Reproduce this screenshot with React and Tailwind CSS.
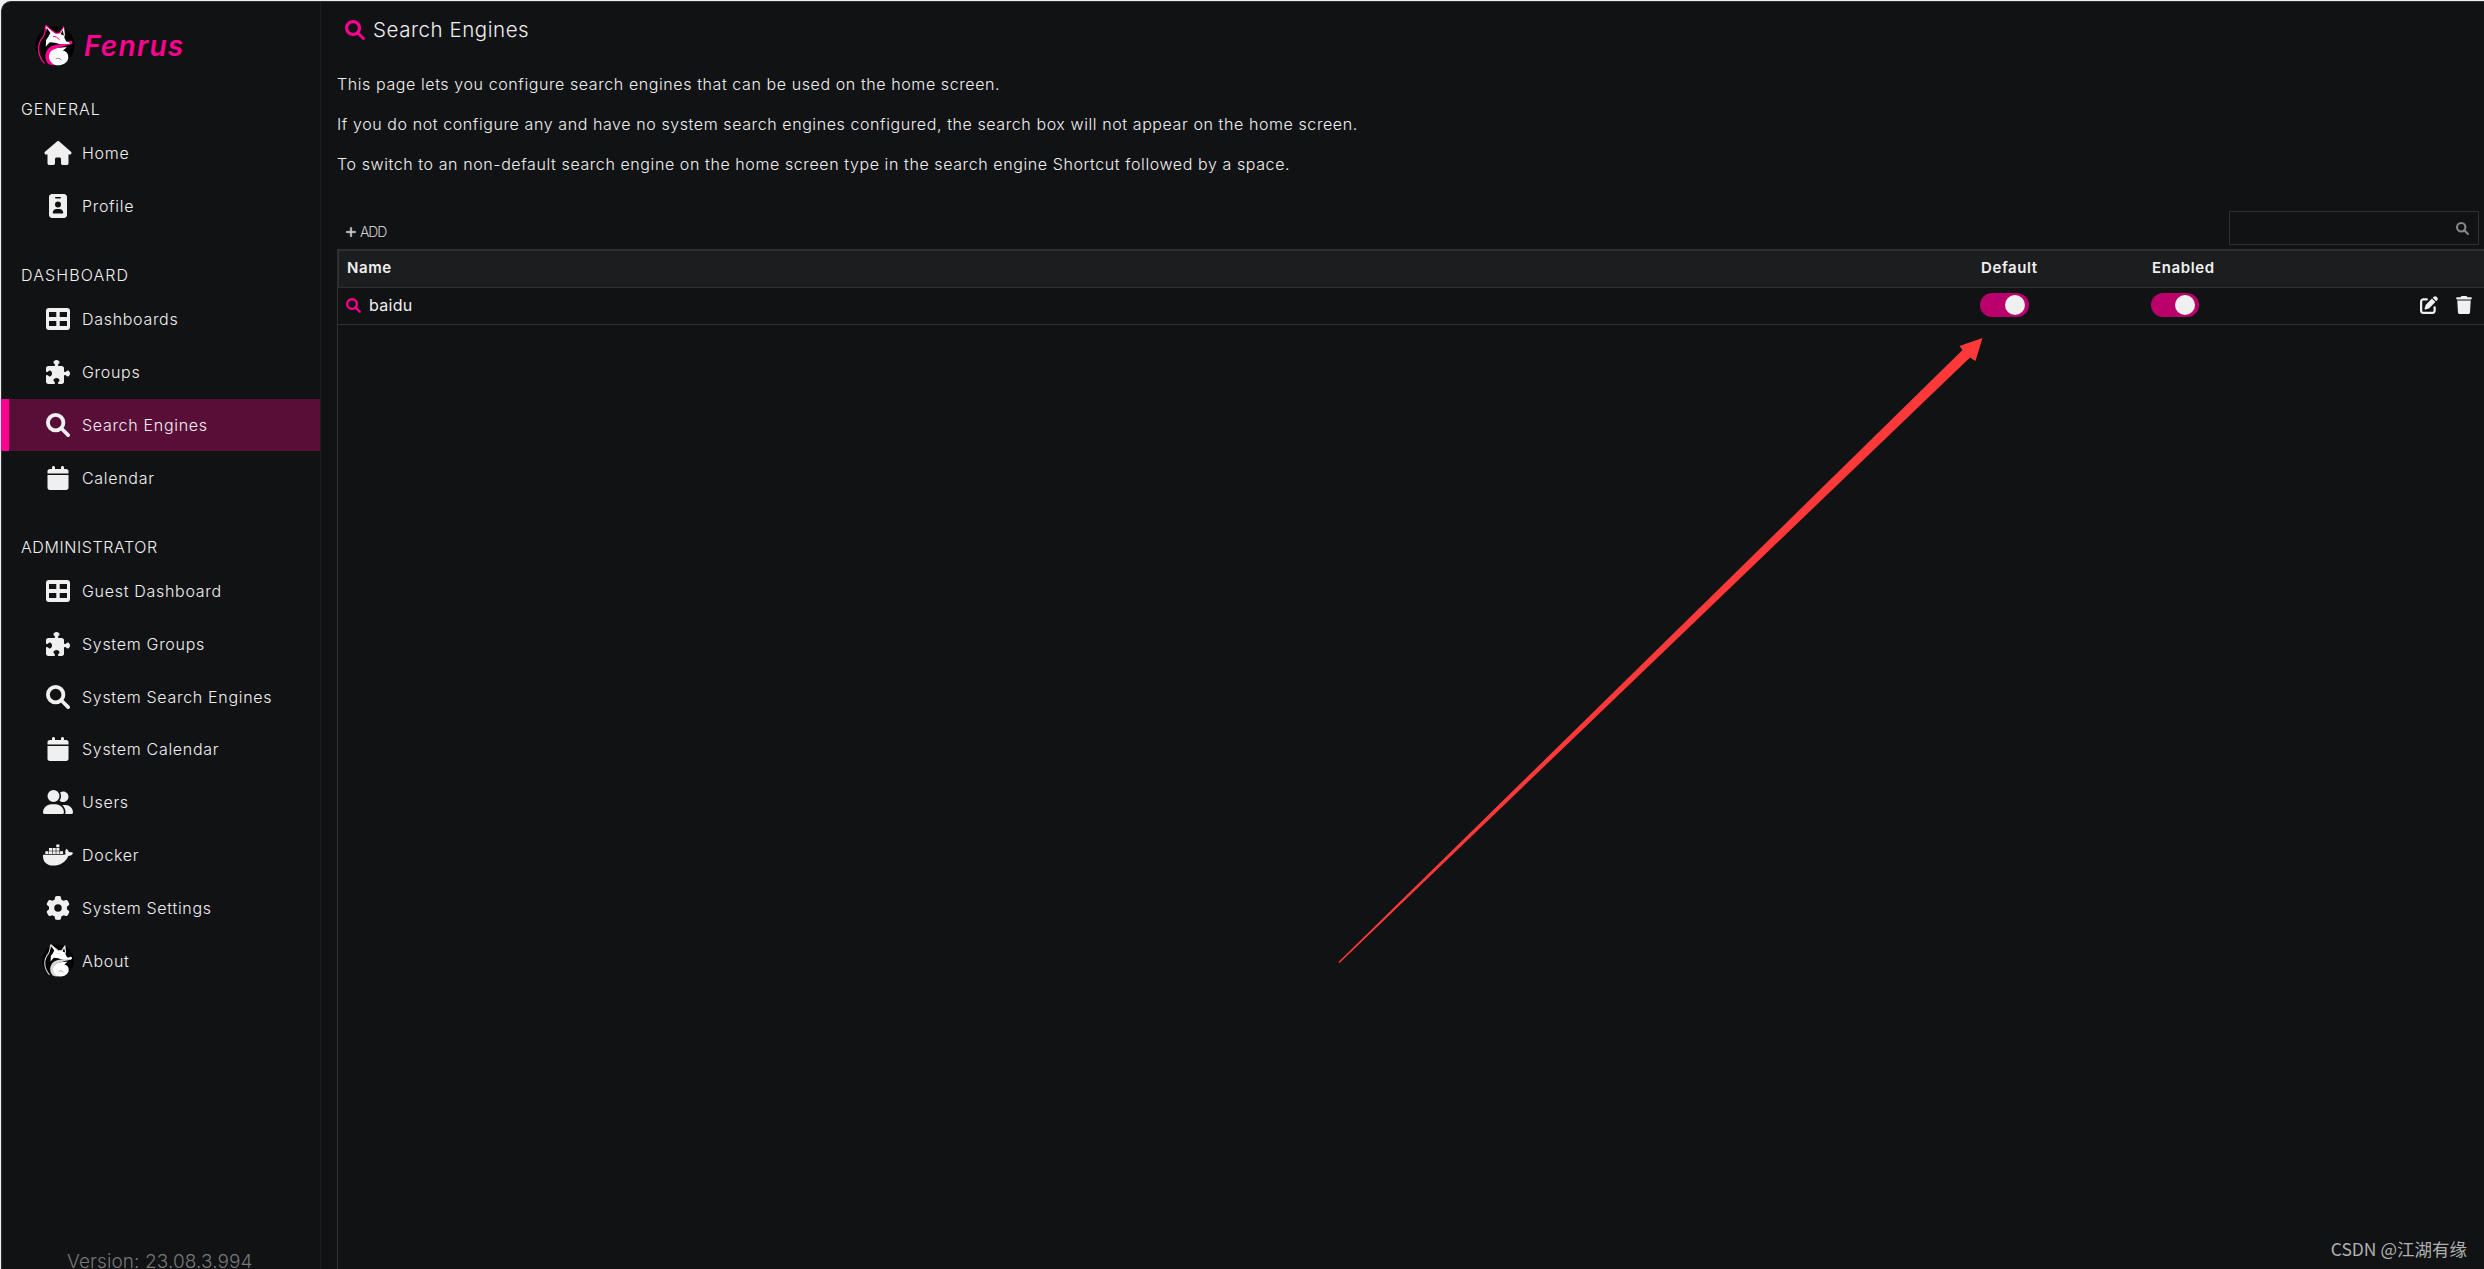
import React, { useState } from "react"
import {
  FaHouse, FaIdBadge, FaPuzzlePiece, FaCalendar,
  FaUserGroup, FaDocker, FaGear, FaPlus, FaPenToSquare, FaTrash,
} from "react-icons/fa6"

function SearchIcon({ className }) {
  return (
    <svg viewBox="0 0 512 512" className={className} fill="none" stroke="currentColor">
      <circle cx="206" cy="206" r="165" strokeWidth="82" />
      <path d="M325 325 L472 472" strokeWidth="76" strokeLinecap="round" />
    </svg>
  )
}

function GridIcon({ className }) {
  return (
    <svg viewBox="0 0 24 24" className={className} fill="currentColor" fillRule="evenodd">
      <path d="M3 1H21A3 3 0 0 1 24 4V20A3 3 0 0 1 21 23H3A3 3 0 0 1 0 20V4A3 3 0 0 1 3 1ZM3 5V10H10.3V5ZM13.7 5V10H21V5ZM3 14V19H10.3V14ZM13.7 14V19H21V14Z" />
    </svg>
  )
}

function FoxLogo({ className, accent = "#ff0090", nose = accent }) {
  return (
    <svg viewBox="14 30 120 124" className={className}>
      <circle cx="74" cy="92" r="59" fill="#000" />
      {/* tail outline */}
      <path d="M46 34 C43 48 45 56 38 66 C22 84 16 116 42 146" fill="none" stroke={accent} strokeWidth="4" />
      {/* ears and head */}
      <path d="M46 31 L63 45 L76 55 L88 54 L101 34 L104 58 L102 68 L108 80 L123 82 L122 88 L96 90 L74 84 L58 82 L46 96 L47 76 L54 64 L47 50 Z" fill="#fff" />
      <path d="M49 38 L60 54 L51 70 L46 56 Z" fill="#000" />
      <path d="M97 46 L101 62 L91 58 Z" fill="#000" />
      <path d="M46 31 L63 45 L76 55 L88 54 L100 36" fill="none" stroke={accent} strokeWidth="3.5" />
      <path d="M68 64 L78 66 L88 75" fill="none" stroke={accent} strokeWidth="3" />
      <path d="M116 79 L125 78 L127 85 L119 90 Z" fill={nose} />
      <path d="M122 88 C94 86 72 88 60 96 C42 108 40 134 54 148 L66 152 L76 151 C58 140 56 122 62 110 C74 98 96 96 122 88 Z" fill={accent} />
      {/* body */}
      <path d="M60 112 C70 99 92 97 110 97 L98 107 C112 110 117 122 113 135 C106 150 88 154 74 151 C55 143 52 124 60 112 Z" fill="#fff" />
      <path d="M76 133 C82 129 90 130 94 137" fill="none" stroke="#555" strokeWidth="2" />
    </svg>
  )
}

const WhiteFox = () => <FoxLogo className="w-8 h-[33px] shrink-0" accent="#d8d8d8" nose="#fff" />

const MENU = [
  {
    title: "GENERAL",
    tracking: "tracking-[0.95px]",
    items: [
      { label: "Home", icon: FaHouse },
      { label: "Profile", icon: FaIdBadge },
    ],
  },
  {
    title: "DASHBOARD",
    tracking: "tracking-[1.1px]",
    items: [
      { label: "Dashboards", icon: GridIcon },
      { label: "Groups", icon: FaPuzzlePiece },
      { label: "Search Engines", icon: SearchIcon, active: true },
      { label: "Calendar", icon: FaCalendar },
    ],
  },
  {
    title: "ADMINISTRATOR",
    tracking: "tracking-[0.6px]",
    items: [
      { label: "Guest Dashboard", icon: GridIcon },
      { label: "System Groups", icon: FaPuzzlePiece },
      { label: "System Search Engines", icon: SearchIcon },
      { label: "System Calendar", icon: FaCalendar },
      { label: "Users", icon: FaUserGroup },
      { label: "Docker", icon: FaDocker },
      { label: "System Settings", icon: FaGear },
      { label: "About", icon: WhiteFox, custom: true },
    ],
  },
]

function MenuItem({ item }) {
  const Icon = item.icon
  return (
    <li className="h-[52.8px] flex items-center">
      <a
        className={`h-[52px] w-full flex items-center border-l-8 pl-[33px] ${
          item.active ? "bg-[#590e38] border-[#ff0090]" : "border-transparent"
        }`}
      >
        <span className="w-8 h-8 flex items-center justify-center shrink-0">
          {item.custom ? <Icon /> : <Icon className="w-[30px] h-6" />}
        </span>
        <span className="ml-2 text-base tracking-[0.7px] whitespace-nowrap">{item.label}</span>
      </a>
    </li>
  )
}

function Sidebar() {
  return (
    <nav className="w-[320px] -ml-px shrink-0 border-r border-[#1c1d1f] flex flex-col">
      <div className="flex items-center h-[68px] pl-[34px] pt-[18px]">
        <FoxLogo className="w-10 h-[41px] shrink-0" />
        <span className="ml-[9px] pt-[2px] text-[28px] leading-none font-semibold italic tracking-[1.3px] text-[#ff0090]">Fenrus</span>
      </div>
      <div className="pt-[13.9px]">
        {MENU.map((group) => (
          <div key={group.title} className="mb-[17.2px]">
            <h3 className={`h-[43.2px] flex items-center pt-2 pl-5 text-base ${group.tracking}`}>{group.title}</h3>
            <ul>
              {group.items.map((item) => <MenuItem key={item.label} item={item} />)}
            </ul>
          </div>
        ))}
      </div>
      <div className="mt-auto pl-[66px] leading-[15px] text-[19px] tracking-[0.1px] text-[#777]">
        Version: 23.08.3.994
      </div>
    </nav>
  )
}

function Toggle({ className }) {
  const [on, setOn] = useState(true)
  return (
    <button
      onClick={() => setOn(!on)}
      className={`h-6 rounded-full p-0.5 pr-1 flex ${on ? "justify-end bg-[#b9006b]" : "justify-start bg-[#444]"} ${className}`}
    >
      <span className="w-5 h-5 rounded-full bg-[#f0f0f0]" />
    </button>
  )
}

function EngineTable({ rows }) {
  return (
    <div className="flex-1 border-t-2 border-l border-[#2f3032]">
      <div className="h-[37px] flex items-center bg-[#1c1d1f] border-b border-l border-[#2f3032] pb-0.5 text-[15px] font-semibold tracking-[0.6px]">
        <span className="flex-1 pl-2">Name</span>
        <span className="w-[171px]">Default</span>
        <span className="w-[332px]">Enabled</span>
      </div>
      {rows.map((row) => (
        <div key={row.name} className="h-[37px] flex items-center border-b border-[#2f3032] pb-0.5">
          <div className="flex-1 flex items-center pl-2">
            <SearchIcon className="w-[15px] h-[15px] text-[#ff0090]" />
            <span className="ml-2 text-base font-normal tracking-[0.3px]">{row.name}</span>
          </div>
          <div className="w-[171px] flex"><Toggle className="w-[49px]" /></div>
          <div className="w-[269px] flex"><Toggle className="w-12" /></div>
          <div className="w-16 flex items-center gap-[17px]">
            <FaPenToSquare className="w-[18px] h-[18px]" />
            <FaTrash className="w-[18px] h-[18px]" />
          </div>
        </div>
      ))}
    </div>
  )
}

export default function App() {
  return (
    <div className="relative w-[2484px] h-[1269px] overflow-hidden bg-[#f0f0f0] pl-px pt-px font-[340] text-[#f0f0f0] [font-family:Inter,'Noto_Sans_CJK_SC',sans-serif]">
      <div className="h-full flex bg-[#111214] border-l border-t border-[#2b3032] rounded-tl-[10px]">
        <Sidebar />
        <main className="flex-1 flex flex-col pl-4">
          <h1 className="h-14 flex items-center pl-2 text-[20.5px] tracking-[0.55px]">
            <SearchIcon className="w-5 h-5 mr-2 text-[#ff0090]" />
            Search Engines
          </h1>
          <div className="mt-[6px] text-base leading-10 tracking-[0.59px]">
            <p>This page lets you configure search engines that can be used on the home screen.</p>
            <p>If you do not configure any and have no system search engines configured, the search box will not appear on the home screen.</p>
            <p>To switch to an non-default search engine on the home screen type in the search engine Shortcut followed by a space.</p>
          </div>
          <div className="mt-[27px] h-[38px] flex justify-between">
            <button className="h-[41px] flex items-center gap-[3px] pl-2 text-[14px] tracking-[-1.1px] text-[#cfcfcf]">
              <FaPlus className="w-3 h-3 stroke-current stroke-[20]" />
              ADD
            </button>
            <div className="w-[250px] h-[34px] mr-[5px] border border-[#2f3032] flex items-center justify-end pr-[9px]">
              <SearchIcon className="w-[13px] h-[13px] text-[#8a8a8a]" />
            </div>
          </div>
          <EngineTable rows={[{ name: "baidu" }]} />
        </main>
      </div>

      <svg className="absolute inset-0 w-full h-full pointer-events-none" viewBox="0 0 2484 1269">
        <polygon points="1982.5,338 1959.5,346 1962.5,350 1338.5,962 1339.5,963 1970,357.5 1975.5,361" fill="#ff3939" />
      </svg>
      <span className="absolute right-[17px] bottom-2 text-[17.5px] leading-6 font-normal text-[#b0b0b0] [font-family:'Noto_Sans_CJK_SC',sans-serif]">
        CSDN @江湖有缘
      </span>
    </div>
  )
}
